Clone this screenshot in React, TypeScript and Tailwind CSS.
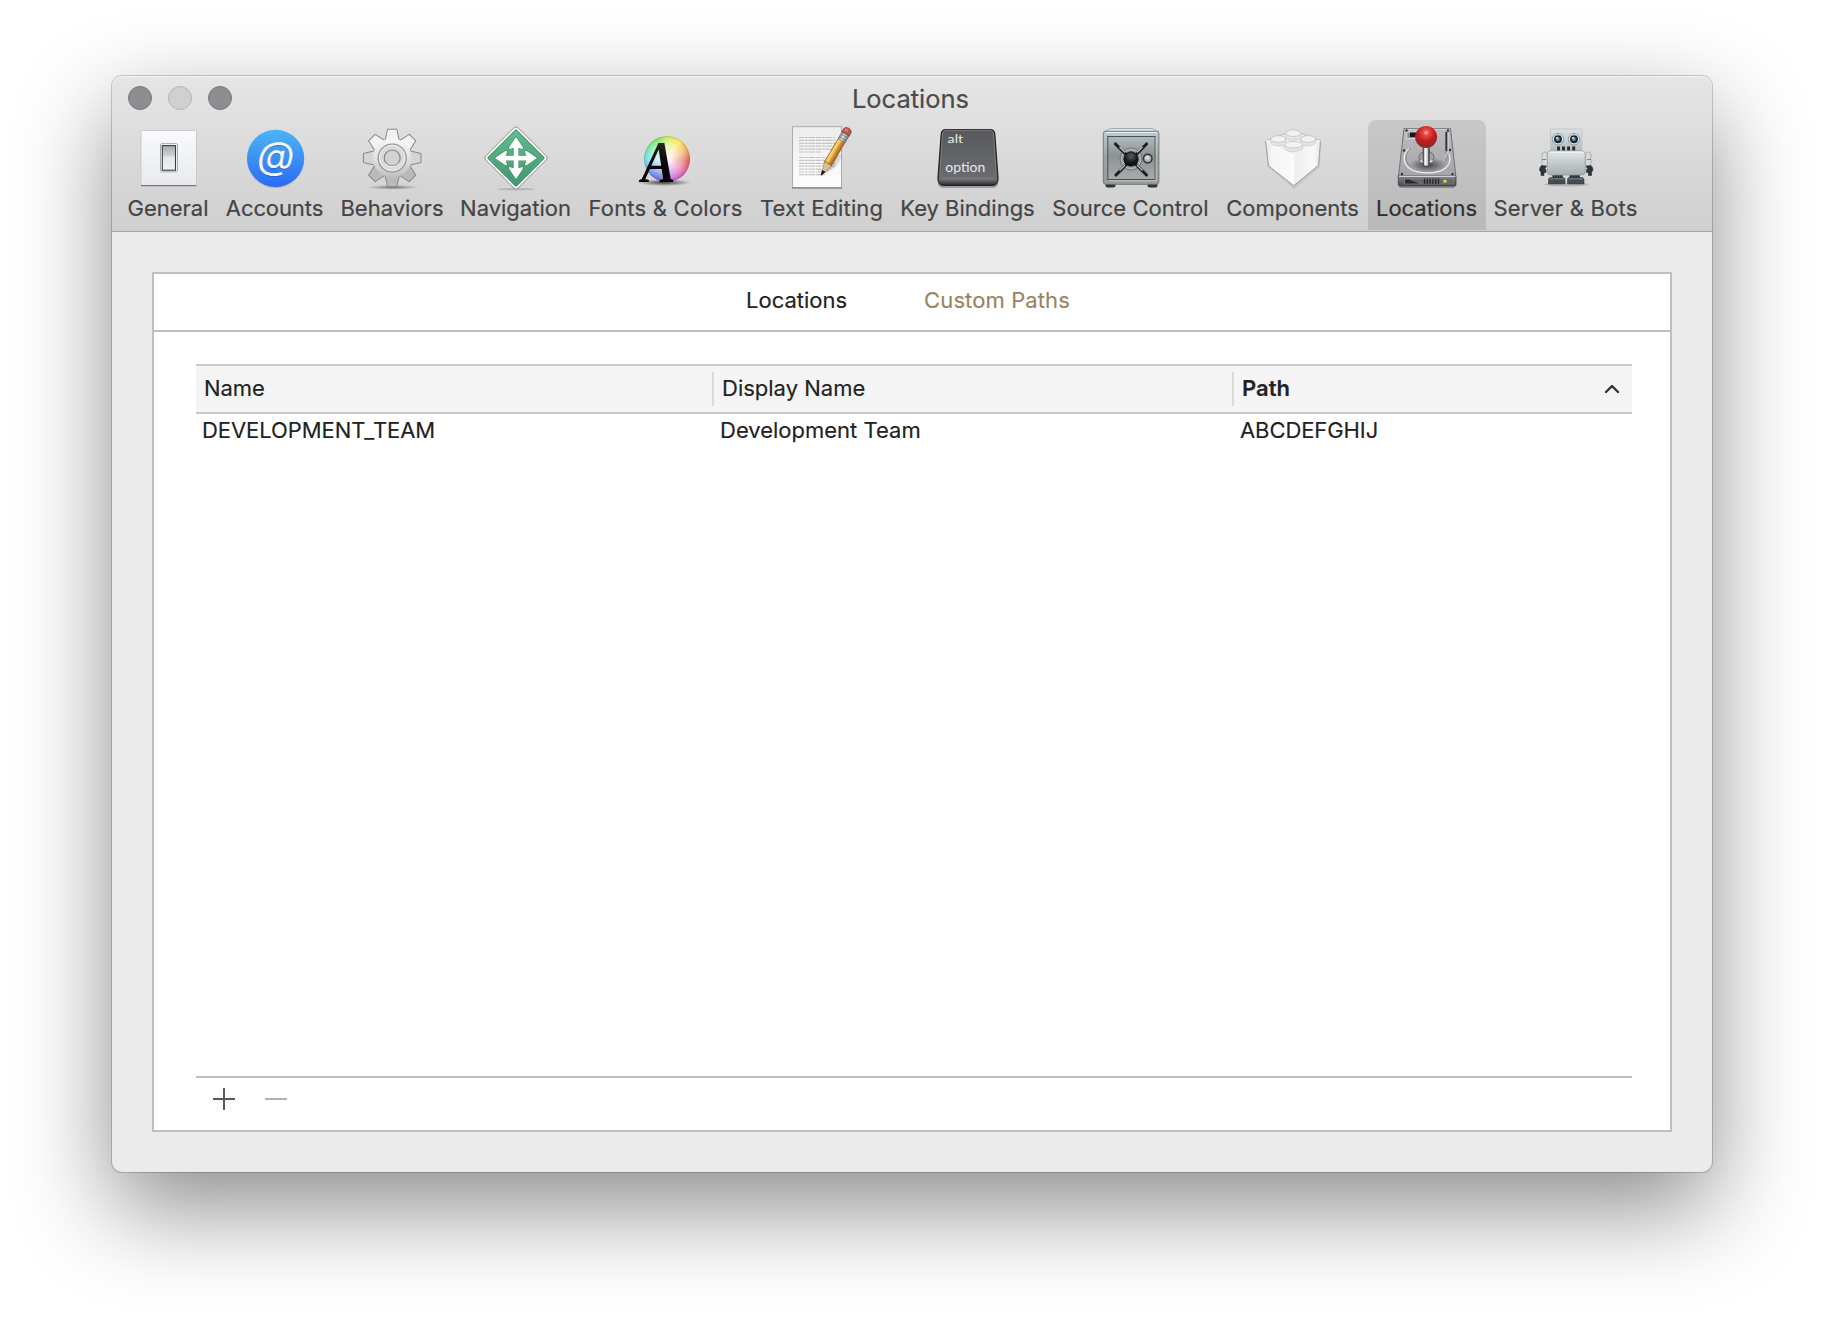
import type { ReactNode } from 'react';

function Icon({ children }: { children: ReactNode }) {
  return (
    <svg width="64" height="64" viewBox="0 0 64 64" className="block shrink-0 overflow-visible">
      {children}
    </svg>
  );
}

function GeneralIcon() {
  return (
    <Icon>
      <defs>
        <linearGradient id="plate" x1="0" y1="0" x2="0" y2="1">
          <stop offset="0" stopColor="#f9fafb" />
          <stop offset="1" stopColor="#e9eaef" />
        </linearGradient>
        <linearGradient id="rocker" x1="0" y1="0" x2="0" y2="1">
          <stop offset="0" stopColor="#a9abae" />
          <stop offset="0.42" stopColor="#d0d1d4" />
          <stop offset="0.46" stopColor="#e4e5e9" />
          <stop offset="1" stopColor="#f1f2f5" />
        </linearGradient>
      </defs>
      <g transform="translate(-0.5 0)">
        <rect x="4.5" y="4.5" width="55.5" height="55" rx="1" fill="url(#plate)" stroke="#c8c9cc" />
        <path d="M4.5 59.7H60" stroke="#77797f" strokeWidth="1.2" />
        <rect x="24" y="17.6" width="17" height="28.2" rx="1.5" fill="#f6f7f9" stroke="#a9abb0" strokeWidth="1" />
        <rect x="25.8" y="19.6" width="13.2" height="24.6" fill="url(#rocker)" stroke="#3b3c40" strokeWidth="1.1" />
      </g>
    </Icon>
  );
}

function AccountsIcon() {
  return (
    <Icon>
      <defs>
        <linearGradient id="at" x1="0" y1="0" x2="0" y2="1">
          <stop offset="0" stopColor="#4bb5f4" />
          <stop offset="1" stopColor="#2a6cf4" />
        </linearGradient>
      </defs>
      <circle cx="32.6" cy="33.3" r="28.6" fill="#000" opacity="0.18" />
      <circle cx="32.6" cy="32.4" r="28.6" fill="url(#at)" />
      <text x="32.8" y="44.3" textAnchor="middle" textLength="37" lengthAdjust="spacingAndGlyphs" fontSize="38" fontStyle="italic" className="font-['Inter']" fill="#1b50b5" opacity="0.5">@</text>
      <text x="32.8" y="43.3" textAnchor="middle" textLength="37" lengthAdjust="spacingAndGlyphs" fontSize="38" fontStyle="italic" className="font-['Inter']" fill="#f4f6fa">@</text>
    </Icon>
  );
}

const TOOTH = 'M-7.2 -17L-4.6 -28.8H4.6L7.2 -17Z';

function BehaviorsIcon() {
  return (
    <Icon>
      <defs>
        <linearGradient id="gear" gradientUnits="userSpaceOnUse" x1="0" y1="-22" x2="0" y2="22">
          <stop offset="0" stopColor="#fafafa" />
          <stop offset="0.55" stopColor="#dededf" />
          <stop offset="1" stopColor="#bbbcbe" />
        </linearGradient>
        <radialGradient id="gearShadow">
          <stop offset="0" stopColor="#000" stopOpacity="0.45" />
          <stop offset="1" stopColor="#000" stopOpacity="0" />
        </radialGradient>
      </defs>
      <ellipse cx="32" cy="61.3" rx="26" ry="2.4" fill="url(#gearShadow)" />
      <g transform="translate(31.2 32)">
        {[0, 45, 90, 135, 180, 225, 270, 315].map((a) => (
          <path key={a} d={TOOTH} transform={`rotate(${a})`} fill={a > 100 && a < 260 ? '#b9babc' : a === 90 || a === 270 ? '#d4d4d6' : '#f3f3f4'} stroke="#85878d" strokeWidth="1" />
        ))}
        <circle r="19.4" fill="url(#gear)" />
        <circle r="14" fill="#dadadb" stroke="#8d8f93" strokeWidth="1.1" />
        <circle r="12.6" fill="none" stroke="#efefef" strokeWidth="0.9" />
        <circle r="8" fill="#d2d2d2" stroke="#7f8185" strokeWidth="1.1" />
        <path d="M-7 5.5A9 9 0 0 0 7 5.5" fill="none" stroke="#f8f8f8" strokeWidth="1" />
      </g>
    </Icon>
  );
}

function NavigationIcon() {
  return (
    <Icon>
      <defs>
        <linearGradient id="nav" x1="0" y1="0" x2="1" y2="1">
          <stop offset="0" stopColor="#5cba8e" />
          <stop offset="1" stopColor="#3f9469" />
        </linearGradient>
        <pattern id="dots" width="3" height="3" patternUnits="userSpaceOnUse" patternTransform="rotate(45)">
          <rect width="1.2" height="1.2" fill="#fff" opacity="0.14" />
        </pattern>
      </defs>
      <ellipse cx="32" cy="63.2" rx="18" ry="1.3" fill="#000" opacity="0.15" />
      <g transform="translate(32 32) rotate(45)">
        <rect x="-22.8" y="-22.8" width="45.6" height="45.6" rx="3" fill="#fbfbfb" stroke="#8b8d8c" strokeWidth="0.9" />
        <rect x="-20.2" y="-20.2" width="40.4" height="40.4" rx="1.2" fill="url(#nav)" stroke="#2f8259" strokeWidth="0.9" />
      </g>
      <path d="M32 4.5L59.5 32L32 59.5L4.5 32Z" fill="url(#dots)" />
      <path
        d="M32 11.3L38.8 21V23.2L34.4 21.8V29.7H42.3L40.9 25.2H43L53 32L43 38.9H40.9L42.3 34.4H34.4V42.3L38.8 40.9V43L32 53L25.2 43V40.9L29.7 42.3V34.4H21.8L23.2 38.9H21L11 32L21 25.2H23.2L21.8 29.7H29.7V21.8L25.2 23.2V21Z"
        fill="#fff"
        stroke="#2f7b56"
        strokeOpacity="0.55"
        strokeWidth="1.2"
        paintOrder="stroke"
      />
    </Icon>
  );
}

function FontsIcon() {
  return (
    <Icon>
      <defs>
        <radialGradient id="shA">
          <stop offset="0" stopColor="#000" stopOpacity="0.7" />
          <stop offset="1" stopColor="#000" stopOpacity="0" />
        </radialGradient>
        <linearGradient id="inkA" x1="0" y1="0" x2="0" y2="1">
          <stop offset="0" stopColor="#3a3a3a" />
          <stop offset="0.5" stopColor="#0a0a0a" />
          <stop offset="1" stopColor="#000" />
        </linearGradient>
      </defs>
      <ellipse cx="30" cy="56.6" rx="27" ry="3.4" fill="url(#shA)" />
      <foreignObject x="10" y="10" width="46" height="46">
        <div className="size-[46px] rounded-full bg-[radial-gradient(circle,rgba(255,255,255,0.95)_8%,rgba(255,255,255,0.45)_48%,rgba(255,255,255,0)_72%),conic-gradient(#c8ec4a,#fbe84a_35deg,#ee9a4a_70deg,#e0504a_95deg,#d94fae_135deg,#b65be0_165deg,#5a62dc_205deg,#5b9aec_240deg,#62dcea_270deg,#6ee88a_310deg,#7ee25a_335deg,#c8ec4a)] shadow-[inset_0_0_2px_rgba(60,60,60,0.6)]" />
      </foreignObject>
      <text x="7.5" y="55.6" fontSize="60" fontWeight="700" fontStyle="italic" textLength="34" lengthAdjust="spacingAndGlyphs" className="font-['Liberation_Serif']" fill="url(#inkA)">A</text>
    </Icon>
  );
}

function TextEditingIcon() {
  const lines = [11.5, 14.4, 17.3, 20.2, 23.1, 26, 31.5, 34.4, 37.3, 40.2, 43.1, 46, 48.7];
  return (
    <Icon>
      <defs>
        <linearGradient id="page" x1="0" y1="0" x2="0" y2="1">
          <stop offset="0" stopColor="#ededed" />
          <stop offset="1" stopColor="#fdfdfd" />
        </linearGradient>
        <linearGradient id="pencil" x1="0" y1="0" x2="1" y2="0">
          <stop offset="0" stopColor="#b8862c" />
          <stop offset="0.15" stopColor="#f8dc6a" />
          <stop offset="0.4" stopColor="#f0c452" />
          <stop offset="0.55" stopColor="#dc953f" />
          <stop offset="1" stopColor="#a55f1c" />
        </linearGradient>
        <linearGradient id="ferrule" x1="0" y1="0" x2="1" y2="0">
          <stop offset="0" stopColor="#7b8084" />
          <stop offset="0.4" stopColor="#dfe5e8" />
          <stop offset="1" stopColor="#686c70" />
        </linearGradient>
        <linearGradient id="pshadow" x1="0" y1="0" x2="1" y2="0.3">
          <stop offset="0" stopColor="#000" stopOpacity="0.45" />
          <stop offset="1" stopColor="#000" stopOpacity="0.05" />
        </linearGradient>
      </defs>
      <rect x="2" y="1.5" width="50" height="61.5" fill="#000" opacity="0.12" />
      <rect x="2.5" y="0.7" width="49" height="61" fill="url(#page)" stroke="#a6a6a6" strokeWidth="0.9" />
      <path d="M2 61.9H52" stroke="#7d7d7d" strokeWidth="1" />
      <g stroke="#c3c3c3" strokeWidth="1.2" strokeDasharray="5 0.7 3 0.6 7 0.8">
        {lines.map((y, i) => (
          <path key={y} d={`M9 ${y}H${i === 5 ? 31 : i > 9 ? 35 : 45}`} />
        ))}
      </g>
      <path d="M32 48.5C42 44 51.5 38 51.5 29L45 27Z" fill="url(#pshadow)" />
      <g transform="translate(31.5 48.7) rotate(30.5)">
        <path d="M0 0L-4 -12.5C-2 -14 2 -14 4 -12.5Z" fill="#e3bd94" stroke="#a07a50" strokeWidth="0.5" />
        <path d="M0 0.5L-1.5 -4H1.5Z" fill="#1d1a1a" stroke="#1d1a1a" strokeWidth="0.8" />
        <path d="M-4 -12.3V-40H4V-12.3L1.7 -13.8L0 -12.3L-2 -13.8Z" fill="url(#pencil)" stroke="#805016" strokeWidth="0.5" />
        <rect x="-4.2" y="-47.5" width="8.4" height="8" fill="url(#ferrule)" stroke="#6e7376" strokeWidth="0.4" />
        <path d="M-4.2 -41.8H4.2M-4.2 -45H4.2" stroke="#6f7478" strokeWidth="0.7" />
        <path d="M-4.3 -47.3V-50.5C-4.3 -55 4.3 -55 4.3 -50.5V-47.3Z" fill="#b65551" stroke="#8a3431" strokeWidth="0.6" />
        <ellipse cx="-1.2" cy="-51" rx="2" ry="1.6" fill="#d98c88" opacity="0.7" />
      </g>
    </Icon>
  );
}

function KeyIcon() {
  return (
    <Icon>
      <defs>
        <linearGradient id="key" x1="0" y1="0" x2="0" y2="1">
          <stop offset="0" stopColor="#58595c" />
          <stop offset="1" stopColor="#6a6c6f" />
        </linearGradient>
        <linearGradient id="keySide" x1="0" y1="0" x2="0" y2="1">
          <stop offset="0.75" stopColor="#3c3d3f" />
          <stop offset="0.89" stopColor="#717376" />
          <stop offset="1" stopColor="#2c2d2f" />
        </linearGradient>
      </defs>
      <rect x="2" y="54" width="60" height="8" rx="5" fill="#000" opacity="0.25" />
      <path d="M10 3.5H54C57 3.5 58.5 5 58.8 8L62 51.5C62.3 56.5 60.5 59.3 56.5 59.3H7.5C3.5 59.3 1.7 56.5 2 51.5L5.2 8C5.5 5 7 3.5 10 3.5Z" fill="url(#keySide)" stroke="#232426" strokeWidth="1.2" />
      <path d="M10.5 4.3H53.5C56 4.3 57.3 5.5 57.5 8L60.2 46.5C60.4 50.5 58.8 52.3 55.5 52.3H8.5C5.2 52.3 3.6 50.5 3.8 46.5L6.5 8C6.7 5.5 8 4.3 10.5 4.3Z" fill="url(#key)" stroke="#7d7f82" strokeWidth="1" />
      <text x="11.6" y="17.3" fontSize="12" textLength="15.5" lengthAdjust="spacingAndGlyphs" className="font-['Lato']" fill="#e9e9ea">alt</text>
      <text x="9.3" y="46" fontSize="12.5" textLength="40" lengthAdjust="spacingAndGlyphs" className="font-['Lato']" fill="#e9e9ea">option</text>
    </Icon>
  );
}

function SafeIcon() {
  return (
    <Icon>
      <defs>
        <linearGradient id="safe" x1="0" y1="0" x2="0" y2="1">
          <stop offset="0" stopColor="#bfccd0" />
          <stop offset="0.5" stopColor="#9ca2a4" />
          <stop offset="1" stopColor="#989b9c" />
        </linearGradient>
        <linearGradient id="door" x1="0" y1="0" x2="0" y2="1">
          <stop offset="0" stopColor="#aebabd" />
          <stop offset="0.45" stopColor="#8e9293" />
          <stop offset="1" stopColor="#a8abac" />
        </linearGradient>
        <radialGradient id="hub" cx="0.5" cy="0.3" r="0.7">
          <stop offset="0" stopColor="#5c5e68" />
          <stop offset="0.6" stopColor="#1b1c20" />
          <stop offset="1" stopColor="#08080a" />
        </radialGradient>
      </defs>
      <rect x="6.5" y="57" width="10" height="4.5" rx="2" fill="#333" />
      <rect x="48.5" y="57" width="10" height="4.5" rx="2" fill="#333" />
      <path d="M11.5 2.5H53L60 6H4.5Z" fill="#d8e6ec" stroke="#87949a" strokeWidth="0.7" />
      <rect x="4.3" y="5.3" width="55.6" height="53" rx="2.5" fill="url(#safe)" stroke="#6d7274" strokeWidth="0.9" />
      <path d="M6 6.5H58.5" stroke="#e6f1f5" strokeWidth="1.2" />
      <rect x="8.8" y="10.5" width="47.3" height="43" fill="url(#door)" stroke="#4b4e50" strokeWidth="1" />
      <path d="M10 54.8H57.2V11" fill="none" stroke="#cdd2d3" strokeWidth="0.8" />
      <circle cx="32" cy="33" r="11" fill="none" stroke="#707577" strokeWidth="1" />
      <circle cx="32" cy="33" r="9.7" fill="#9ba0a2" stroke="#c0c5c6" strokeWidth="0.7" />
      <path d="M16.5 18L47.5 49M47.5 18L17 49" stroke="#1d1e20" strokeWidth="3.1" strokeLinecap="round" />
      <path d="M20.5 21L26 26.5M43.5 21L38 26.5M20.5 44.5L26 39M43.5 44.5L38 39" stroke="#c1c6c8" strokeWidth="1.2" />
      <circle cx="32" cy="33" r="7.2" fill="url(#hub)" stroke="#0c0c0e" strokeWidth="0.8" />
      <circle cx="48.7" cy="32.6" r="4.3" fill="#a9b4b4" stroke="#2e3133" strokeWidth="1.5" />
      <circle cx="48.5" cy="31.8" r="2" fill="#d5dddd" />
    </Icon>
  );
}

function Stud({ x, y, w = 7.5 }: { x: number; y: number; w?: number }) {
  return (
    <g transform={`translate(${x} ${y})`}>
      <path d={`M${-w} 0V3.5A${w} 3.4 0 0 0 ${w} 3.5V0Z`} fill="#e4e4e4" stroke="#c6c6c6" strokeWidth="0.6" />
      <ellipse rx={w} ry="3.3" fill="#f2f2f2" stroke="#bdbdbd" strokeWidth="0.7" />
    </g>
  );
}

function BrickIcon() {
  return (
    <Icon>
      <defs>
        <linearGradient id="bl" x1="0" y1="0" x2="1" y2="0">
          <stop offset="0" stopColor="#e4e4e4" />
          <stop offset="0.25" stopColor="#f6f6f6" />
          <stop offset="1" stopColor="#fbfbfb" />
        </linearGradient>
        <linearGradient id="br" x1="0" y1="0" x2="1" y2="0">
          <stop offset="0" stopColor="#ededed" />
          <stop offset="0.75" stopColor="#f9f9f9" />
          <stop offset="1" stopColor="#e6e6e6" />
        </linearGradient>
      </defs>
      <path d="M4.5 16L33 61L60.5 17L58.5 42L33 63L6.5 41Z" fill="#000" opacity="0.07" />
      <path d="M4.5 14.5L25 7.5H40L59.5 14.3L32.8 28.5Z" fill="#f0f0f0" stroke="#a8a8a8" strokeWidth="0.7" />
      <path d="M4.5 14.5L32.8 28.7V59.7L7.5 39.8Z" fill="url(#bl)" />
      <path d="M59.5 14.3L32.8 28.7V59.7L57.5 39.3Z" fill="url(#br)" />
      <path d="M4.5 14.5L7.5 39.8L32.8 59.7L57.5 39.3L59.5 14.3" fill="none" stroke="#8f8f8f" strokeWidth="0.8" strokeLinejoin="round" />
      <path d="M4.5 14.5L32.8 28.5L59.5 14.3M32.8 28.5V57" fill="none" stroke="#fff" strokeWidth="1" />
      <Stud x={32.3} y={7.3} />
      <Stud x={17.2} y={13} />
      <Stud x={47.2} y={13} />
      <Stud x={32.5} y={18.7} w={9} />
    </Icon>
  );
}

function DriveIcon() {
  return (
    <Icon>
      <defs>
        <linearGradient id="drive" x1="0" y1="0" x2="0" y2="1">
          <stop offset="0" stopColor="#bcbcc0" />
          <stop offset="1" stopColor="#a4a4a9" />
        </linearGradient>
        <linearGradient id="bezel" x1="0" y1="0" x2="0" y2="1">
          <stop offset="0" stopColor="#85868c" />
          <stop offset="1" stopColor="#4a4b50" />
        </linearGradient>
        <radialGradient id="ball" cx="0.5" cy="0.3" r="0.65">
          <stop offset="0" stopColor="#ffc1b8" />
          <stop offset="0.18" stopColor="#e94d48" />
          <stop offset="0.6" stopColor="#c41a1b" />
          <stop offset="1" stopColor="#8a2a2a" />
        </radialGradient>
        <radialGradient id="well">
          <stop offset="0" stopColor="#000" stopOpacity="0.6" />
          <stop offset="1" stopColor="#000" stopOpacity="0" />
        </radialGradient>
        <linearGradient id="stick" x1="0" y1="0" x2="1" y2="0">
          <stop offset="0" stopColor="#55555a" />
          <stop offset="0.3" stopColor="#fff" />
          <stop offset="0.7" stopColor="#d0d0d2" />
          <stop offset="1" stopColor="#333" />
        </linearGradient>
      </defs>
      <rect x="4" y="57" width="56" height="5" rx="2" fill="#000" opacity="0.25" />
      <path d="M9 2.5H55.5L60.8 50H3.5Z" fill="url(#drive)" stroke="#66666b" strokeWidth="0.9" />
      <path d="M9.5 3.3H55" stroke="#d9d9dc" strokeWidth="0.9" />
      <path d="M3.3 50H61V58.5C61 59.5 60.5 60 59.5 60H5C4 60 3.3 59.5 3.3 58.5Z" fill="url(#bezel)" stroke="#3f4045" strokeWidth="0.8" />
      <path d="M4 50.3H60.3" stroke="#d2d2d6" strokeWidth="1.3" />
      <rect x="9.5" y="53" width="49" height="5" fill="#65666c" stroke="#85868b" strokeWidth="0.5" />
      <path d="M10 53.5H14L24 57.5H10Z" fill="#2b2c30" />
      <path d="M29.5 52.5V58M32.3 52.5V58M35.1 52.5V58M37.9 52.5V58M40.7 52.5V58M43.5 52.5V58" stroke="#242529" strokeWidth="1.3" />
      <rect x="48.5" y="54" width="3" height="2.5" fill="#f2e14a" />
      <path d="M14 22.5C8 28 7.5 37 14 42C22 48.5 43 48.5 50.5 42C57 36.5 56 29 51 24.5" fill="none" stroke="#eeeef0" strokeWidth="1.3" />
      <path d="M15.5 22C9.5 28 9.5 36 15.5 40.5" fill="none" stroke="#7b7b80" strokeWidth="0.8" />
      <path d="M50 16V38L53.5 32V5.5H50.5Z" fill="#9a9a9f" />
      <path d="M51.3 6V25" stroke="#2f2f33" strokeWidth="1.6" />
      <path d="M53.3 6.5V25L49.5 32" fill="none" stroke="#dedee1" strokeWidth="0.9" />
      <ellipse cx="33" cy="39" rx="19" ry="7.5" fill="url(#well)" />
      <ellipse cx="31.5" cy="31" rx="7.5" ry="5.6" fill="#a4a4a8" stroke="#606065" strokeWidth="0.9" />
      <path d="M25.5 34.5A7.5 5.6 0 0 0 37.5 34.5" fill="none" stroke="#f4f4f4" strokeWidth="1.3" />
      <rect x="28.2" y="20" width="6" height="20" rx="1.5" fill="url(#stick)" stroke="#39393d" strokeWidth="0.8" />
      <rect x="11.8" y="6" width="14" height="6.5" fill="#8c8c91" stroke="#e1e1e4" strokeWidth="0.9" />
      <rect x="15" y="6.5" width="8" height="4.5" fill="#17171a" />
      {[[11.5, 4.5], [53, 4.5], [9, 24.5], [55, 24], [7, 48], [57.5, 48]].map(([x, y]) => (
        <circle key={`${x}-${y}`} cx={x} cy={y} r="1.2" fill="#303034" />
      ))}
      <circle cx="31.1" cy="11" r="11" fill="url(#ball)" />
    </Icon>
  );
}

function RobotIcon() {
  return (
    <Icon>
      <defs>
        <linearGradient id="torso" x1="0" y1="0" x2="0" y2="1">
          <stop offset="0" stopColor="#e4eaeb" />
          <stop offset="0.3" stopColor="#d0d5d6" />
          <stop offset="1" stopColor="#a8adae" />
        </linearGradient>
        <linearGradient id="head" x1="0" y1="0" x2="0" y2="1">
          <stop offset="0" stopColor="#d9e3e7" />
          <stop offset="1" stopColor="#b2b9bc" />
        </linearGradient>
      </defs>
      <ellipse cx="32.5" cy="58.5" rx="22" ry="2" fill="#000" opacity="0.15" />
      <rect x="16.5" y="3" width="31.5" height="23" rx="0.8" fill="url(#head)" stroke="#b4bbbe" strokeWidth="0.6" />
      {[24, 40].map((x) => (
        <g key={x}>
          <circle cx={x} cy="13.3" r="5.7" fill="#dfe7ea" stroke="#868e92" strokeWidth="0.9" />
          <circle cx={x} cy="13.3" r="4" fill="#1d2832" />
          <circle cx={x - 0.2} cy="13" r="2" fill="#6390b2" />
          <circle cx={x - 1} cy="12" r="0.9" fill="#eff7fb" />
        </g>
      ))}
      <path d="M24.5 20.5V25.5M29.5 20.5V25.5M34.6 20.5V25.5M39.7 20.5V25.5" stroke="#23282b" strokeWidth="2.9" />
      <rect x="8" y="26" width="5.5" height="15" rx="2.7" fill="#d5dbdd" stroke="#90979a" strokeWidth="0.6" />
      <rect x="51.5" y="26" width="5.5" height="15" rx="2.7" fill="#d5dbdd" stroke="#90979a" strokeWidth="0.6" />
      <path d="M8 33.5H12M53 33.5H57" stroke="#6a7175" strokeWidth="0.8" />
      <path d="M7.5 39.5C5 42 5 45 7 46V49.500H10V46.500H12V43.500H10.500L12.500 40ZM57 39.500C59.500 42 59.500 45 57.500 46V49.500H54.500V46.500H52.500V43.500H54L52 40Z" fill="#2c3338" stroke="#2c3338" strokeWidth="0.6" />
      <path d="M18.5 48H29V53H18.5ZM35.5 48H46V53H35.5Z" fill="#5b6265" />
      <path d="M19.5 49V52M22 49V52M24.5 49V52M27 49V52M37 49V52M39.5 49V52M42 49V52M44.5 49V52" stroke="#191c1e" strokeWidth="1.3" />
      <path d="M16.5 51.5H29.5C30.5 51.5 31 52.5 31 54V58H14.5V54C14.5 52.5 15 51.5 16.5 51.5ZM35 51.5H48C49.5 51.5 50 52.5 50 54V58H33.5V54C33.5 52.5 34 51.5 35 51.5Z" fill="#464c50" stroke="#2b3033" strokeWidth="0.5" />
      <path d="M15.5 52.8H30M34.5 52.8H49" stroke="#868c8f" strokeWidth="0.9" />
      <rect x="13.3" y="24.8" width="38" height="24.2" rx="3.5" fill="url(#torso)" stroke="#8f9597" strokeWidth="0.7" />
      <path d="M15.5 26.2H49" stroke="#fff" strokeWidth="0.9" opacity="0.8" />
    </Icon>
  );
}

const tools = [
  { label: 'General', icon: <GeneralIcon />, width: 'w-[97px]' },
  { label: 'Accounts', icon: <AccountsIcon />, width: 'w-[116px]', spacing: 'tracking-[-0.1px]' },
  { label: 'Behaviors', icon: <BehaviorsIcon />, width: 'w-[119px]' },
  { label: 'Navigation', icon: <NavigationIcon />, width: 'w-[128px]' },
  { label: 'Fonts & Colors', icon: <FontsIcon />, width: 'w-[172px]', spacing: 'tracking-[0.22px]' },
  { label: 'Text Editing', icon: <TextEditingIcon />, width: 'w-[140px]', spacing: 'tracking-[0.12px]' },
  { label: 'Key Bindings', icon: <KeyIcon />, width: 'w-[152px]' },
  { label: 'Source Control', icon: <SafeIcon />, width: 'w-[174px]', spacing: 'tracking-[0.05px]' },
  { label: 'Components', icon: <BrickIcon />, width: 'w-[150px]' },
  { label: 'Locations', icon: <DriveIcon />, width: 'w-[118px]', selected: true },
  { label: 'Server & Bots', icon: <RobotIcon />, width: 'w-[160px]', spacing: 'tracking-[0.2px]' },
];

function Toolbar() {
  return (
    <nav className="flex h-[110px] pl-2">
      {tools.map((t) => (
        <button
          key={t.label}
          className={`flex shrink-0 flex-col items-center rounded-t-lg pt-1.5 ${t.width} ${t.selected ? 'bg-black/10 text-[#2f2f2f]' : 'text-[#444]'}`}
        >
          {t.icon}
          <span className={`mt-1 -ml-px whitespace-nowrap text-[22px] leading-7 [-webkit-text-stroke:0.2px] ${t.spacing ?? ''}`}>{t.label}</span>
        </button>
      ))}
    </nav>
  );
}

function TitleBar() {
  return (
    <header className="h-[156px] rounded-t-[10px] border-b border-[#a5a5a5] bg-linear-to-b from-[#e6e6e6] to-[#cfcfcf] shadow-[inset_0_1px_0_#f4f4f4]">
      <div className="grid h-11 grid-cols-[1fr_auto_1fr] items-center pl-4">
        <div className="flex gap-4">
          <span className="size-6 rounded-full border border-[#77767b] bg-[#8e8d92]" />
          <span className="size-6 rounded-full border border-[#b4b4b4] bg-[#d0d0d0]" />
          <span className="size-6 rounded-full border border-[#77767b] bg-[#8e8d92]" />
        </div>
        <h1 className="-ml-[19px] pt-0.5 text-[25.5px] leading-8 text-[#4b4b4b] [-webkit-text-stroke:0.2px]">Locations</h1>
      </div>
      <Toolbar />
    </header>
  );
}

function PathTable() {
  return (
    <div className="flex flex-1 flex-col text-[22px] leading-7 text-[#222] [-webkit-text-stroke:0.15px]">
      <div className="grid h-[50px] grid-cols-[516px_520px_1fr] items-center border-y-2 border-[#cacaca] bg-[#f5f5f5]">
        <div className="pb-0.5 pl-2 tracking-[-0.1px]">Name</div>
        <div className="flex h-[34px] items-center border-l-2 border-[#d9d9d9] pb-0.5 pl-2">Display Name</div>
        <div className="flex h-[34px] items-center justify-between border-l-2 border-[#d9d9d9] pl-2 pr-3">
          <span className="pb-0.5 font-semibold">Path</span>
          <svg width="16" height="10" viewBox="0 0 16 10" fill="none" stroke="#333" strokeWidth="2.4" strokeLinecap="round" strokeLinejoin="round">
            <path d="M2 8L8 2L14 8" />
          </svg>
        </div>
      </div>
      <div className="grid h-8 grid-cols-[518px_520px_1fr] items-center">
        <div className="pl-1.5 tracking-[-0.06px]">DEVELOPMENT_TEAM</div>
        <div className="pl-1.5">Development Team</div>
        <div className="pl-1.5 tracking-[-0.08px]">ABCDEFGHIJ</div>
      </div>
    </div>
  );
}

export default function App() {
  return (
    <main className="h-[1320px] w-[1824px] overflow-hidden bg-white px-28 pt-19 font-['Inter',sans-serif]">
      <section className="flex h-[1096px] w-[1600px] flex-col rounded-[10px] bg-[#ebebeb] shadow-[0_0_0_1px_rgba(0,0,0,0.18),0_36px_96px_rgba(0,0,0,0.46)]">
        <TitleBar />
        <div className="mx-10 mt-10 flex h-[860px] flex-col border-2 border-[#bfbfbf] bg-white">
          <div className="flex h-[58px] items-center border-b-2 border-[#bfbfbf] pb-1 pl-[592px] text-[22px] leading-7 [-webkit-text-stroke:0.15px]">
            <button className="text-[#222]">Locations</button>
            <button className="ml-[77px] tracking-[0.1px] text-[#9a8560]">Custom Paths</button>
          </div>
          <div className="flex flex-1 flex-col pl-[42px] pr-[38px] pt-8">
            <PathTable />
            <footer className="flex h-[54px] gap-[30px] border-t-2 border-[#bfbfbf] pl-[17px] pt-2.5">
              <svg width="22" height="22" viewBox="0 0 22 22" stroke="#58585a" strokeWidth="2">
                <path d="M11 0V22M0 11H22" />
              </svg>
              <svg width="22" height="22" viewBox="0 0 22 22" stroke="#b1b1b1" strokeWidth="2">
                <path d="M0 11H22" />
              </svg>
            </footer>
          </div>
        </div>
      </section>
    </main>
  );
}
